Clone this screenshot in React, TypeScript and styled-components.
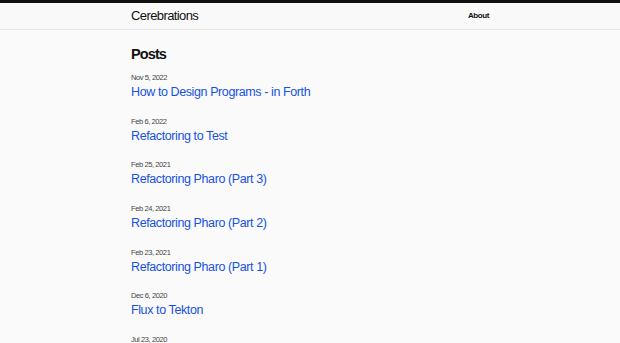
import React from 'react';
import styled, { createGlobalStyle } from 'styled-components';

const posts = [
  { date: 'Nov 5, 2022', title: 'How to Design Programs - in Forth' },
  { date: 'Feb 6, 2022', title: 'Refactoring to Test' },
  { date: 'Feb 25, 2021', title: 'Refactoring Pharo (Part 3)' },
  { date: 'Feb 24, 2021', title: 'Refactoring Pharo (Part 2)' },
  { date: 'Feb 23, 2021', title: 'Refactoring Pharo (Part 1)' },
  { date: 'Dec 6, 2020', title: 'Flux to Tekton' },
  { date: 'Jul 23, 2020', title: 'Tekton Triggers' },
];

const GlobalStyle = createGlobalStyle`
  html, body {
    margin: 0;
    background: #fafafa;
    font-family: "Liberation Sans", Arial, sans-serif;
    color: #111;
  }
`;

const TopBar = styled.header`
  border-top: 3px solid #111;
  border-bottom: 1px solid #e6e6e6;
  background: #f9f9f9;
`;

const Container = styled.div`
  width: 358px;
  margin: 0 auto;
`;

const NavRow = styled(Container)`
  display: flex;
  align-items: center;
  justify-content: space-between;
  height: 26px;
`;

const Brand = styled.a`
  font-size: 13px;
  color: #111;
  text-decoration: none;
  letter-spacing: -0.6px;
  margin-top: -1px;
`;

const NavLink = styled.a`
  font-size: 8px;
  font-weight: bold;
  color: #111;
  text-decoration: none;
  letter-spacing: -0.4px;
  margin-top: -2px;
`;

const Main = styled(Container)`
  padding-top: 16px;
`;

const Heading = styled.h1`
  margin: 0 0 11px;
  font-size: 14.5px;
  font-weight: bold;
  letter-spacing: -0.9px;
`;

const List = styled.ul`
  list-style: none;
  margin: 0;
  padding: 0;
  display: flex;
  flex-direction: column;
  gap: 17.7px;
`;

const Item = styled.li`
  display: flex;
  flex-direction: column;
  gap: 3px;
`;

const PostDate = styled.span`
  font-size: 7.5px;
  color: #444;
  letter-spacing: -0.4px;
`;

const PostLink = styled.a`
  font-size: 12.5px;
  color: #1652e0;
  text-decoration: none;
  letter-spacing: -0.4px;
`;

export default function App() {
  return (
    <>
      <GlobalStyle />
      <TopBar>
        <NavRow>
          <Brand href="#">Cerebrations</Brand>
          <NavLink href="#">About</NavLink>
        </NavRow>
      </TopBar>
      <Main>
        <Heading>Posts</Heading>
        <List>
          {posts.map((p) => (
            <Item key={p.title}>
              <PostDate>{p.date}</PostDate>
              <PostLink href="#">{p.title}</PostLink>
            </Item>
          ))}
        </List>
      </Main>
    </>
  );
}
